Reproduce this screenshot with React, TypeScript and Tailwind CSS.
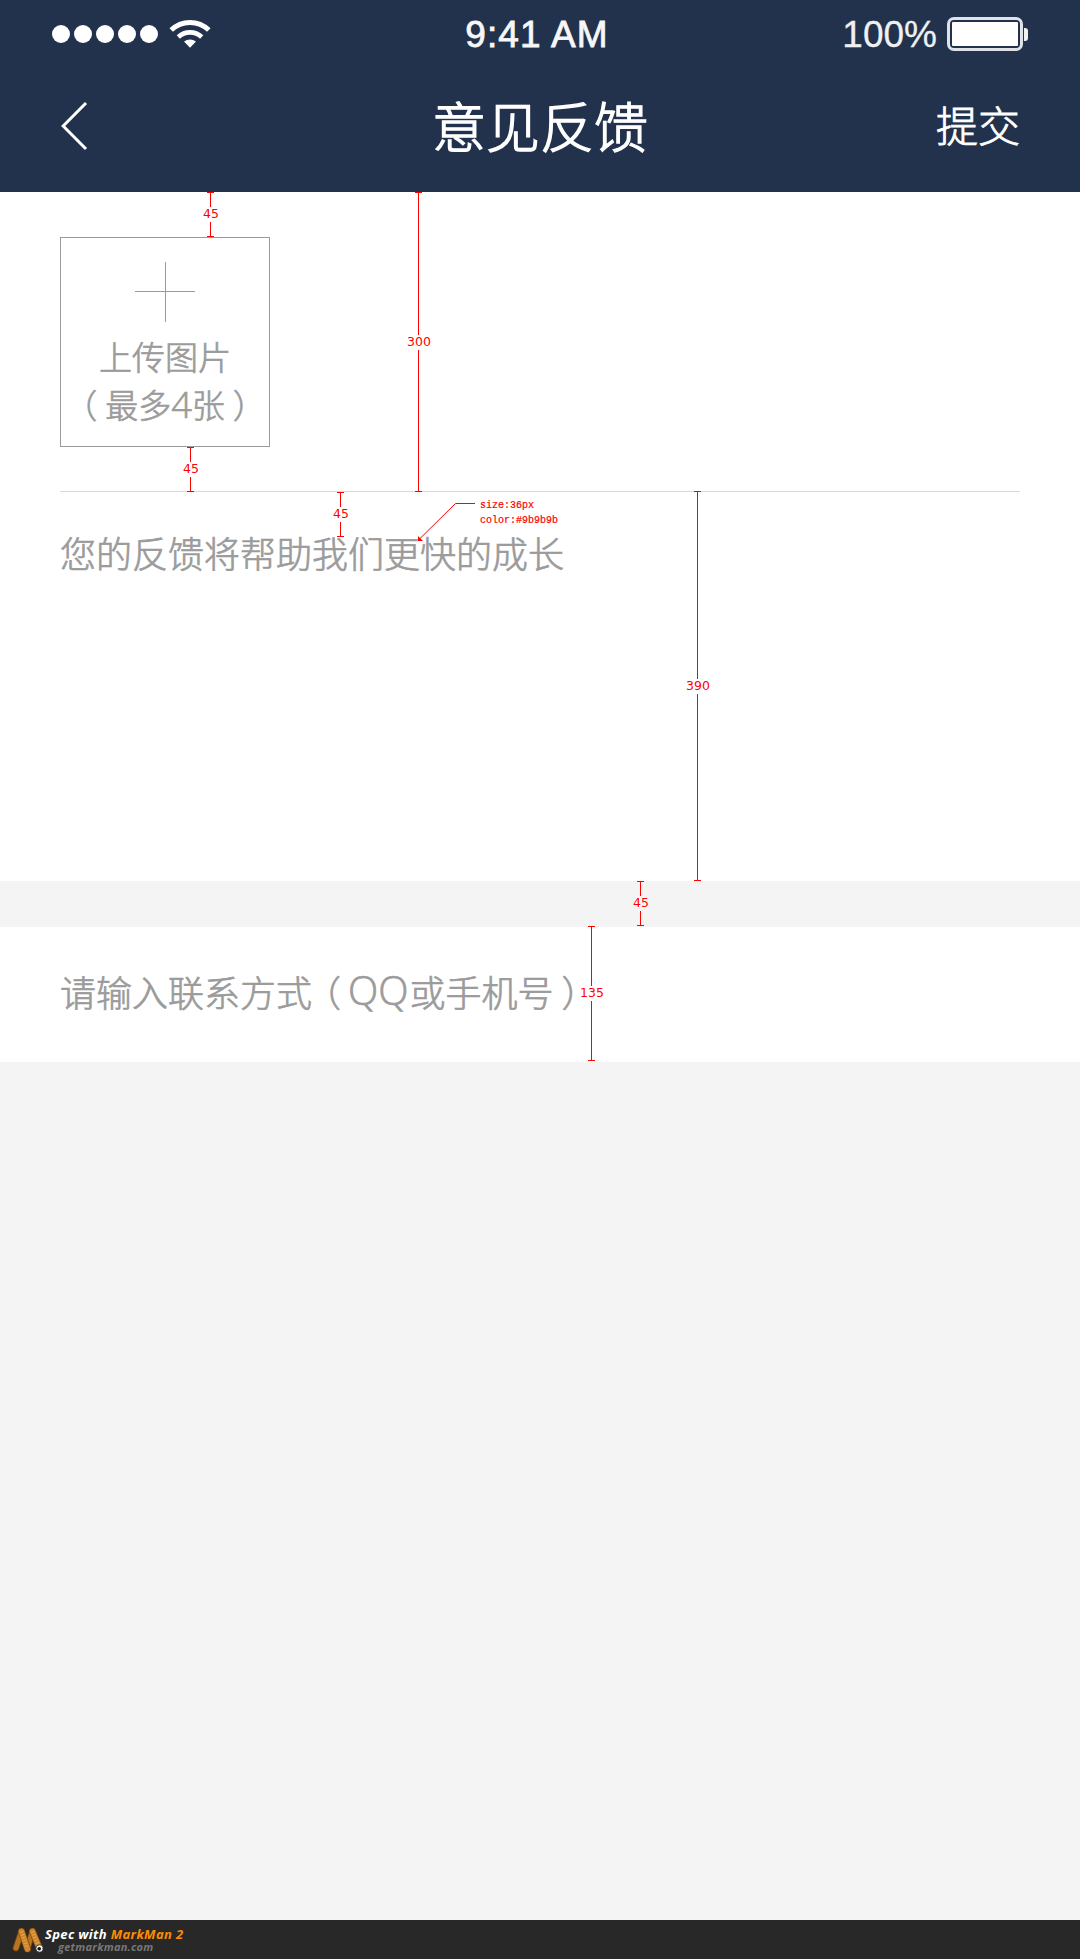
import React from "react";

type MeasureProps = { value: number; place: string };

function Measure({ value, place }: MeasureProps) {
  return (
    <div className={`absolute flex w-[7px] flex-col items-center ${place}`}>
      <i className="h-px w-[7px] bg-[#ff0000]" />
      <i className="w-px flex-1 bg-[#ff0000]" />
      <span className="-mt-px mb-px flex h-[15px] items-center justify-center pl-px font-['DejaVu_Sans',sans-serif] text-[12.5px] font-normal leading-[15px] text-[#ff0000] [text-shadow:0_0_2px_#fff,0_0_2px_#fff,0_0_1px_#fff]">
        {value}
      </span>
      <i className="w-px flex-1 bg-[#ff0000]" />
      <i className="h-px w-[7px] bg-[#ff0000]" />
    </div>
  );
}

function StatusBar() {
  return (
    <div className="grid h-[68px] grid-cols-3 items-center pl-[52px] pr-[52px]">
      <div className="flex items-center">
        <div className="flex gap-[4.1px]">
          {[0, 1, 2, 3, 4].map((n) => (
            <i key={n} className="size-[18px] rounded-full bg-white" />
          ))}
        </div>
        <svg className="ml-[10.5px]" width="42" height="30" viewBox="0 0 42 30" fill="none" stroke="#fff">
          <path d="M2.2 11A27 27 0 0 1 39.8 11" strokeWidth="5" />
          <path d="M9.3 18A17 17 0 0 1 32.7 18" strokeWidth="4.6" />
          <path d="M15 22.6Q21 18.5 27 22.6L21 28.8Z" fill="#fff" stroke="none" />
        </svg>
      </div>
      <div className="-ml-[6px] whitespace-nowrap text-center font-['Liberation_Sans',sans-serif] text-[37px] leading-none tracking-[1.1px] text-[#f7f7f7] [-webkit-text-stroke:0.8px_#f7f7f7]">
        9:41 AM
      </div>
      <div className="flex items-center justify-end">
        <span className="mr-[10px] font-['Liberation_Sans',sans-serif] text-[37px] leading-none text-[#eef0f2] [-webkit-text-stroke:0.3px_#eef0f2]">100%</span>
        <div className="h-[34px] w-[76px] rounded-[7px] border-[3px] border-[#dfe2e6] p-[2px]">
          <div className="size-full rounded-[1px] bg-white" />
        </div>
        <i className="ml-[1px] h-[13px] w-[4px] rounded-r-[3px] bg-[#f0f1f3]" />
      </div>
    </div>
  );
}

function MarkManLogo() {
  return (
    <svg className="shrink-0" width="34" height="28" viewBox="0 0 34 28" fill="none" strokeLinecap="round">
      <path d="M5 22L10.5 5.5M16.5 22L21.5 5.5" stroke="#7b450b" strokeWidth="6.6" />
      <path d="M5 22L10.5 5.5M16.5 22L21.5 5.5" stroke="#b8741f" strokeWidth="5" />
      <path d="M10.5 5.5L16.5 23M21.5 5.5L28 21" stroke="#7b450b" strokeWidth="7" />
      <path d="M10.5 5.5L16.5 23M21.5 5.5L28 21" stroke="#cb852c" strokeWidth="5.8" />
      <path d="M10.5 5.5L16.5 23M21.5 5.5L28 21" stroke="#e5a64f" strokeWidth="4" strokeDasharray="1 2" strokeLinecap="butt" />
      <circle cx="28.5" cy="22.5" r="3.7" fill="#f2f2f2" stroke="#222" strokeWidth="0.8" />
      <circle cx="28.2" cy="22.8" r="1.8" fill="#111" />
    </svg>
  );
}

export default function App() {
  return (
    <div className="relative flex h-[1959px] w-[1080px] flex-col overflow-hidden bg-[#f4f4f4] font-['Noto_Sans_CJK_SC',sans-serif] font-light">
      <header className="h-[192px] shrink-0 bg-[#22324c] text-white">
        <StatusBar />
        <div className="grid h-[116px] grid-cols-3 items-center px-[60px]">
          <svg width="30" height="50" viewBox="0 0 30 50" fill="none" stroke="#fff" strokeWidth="3">
            <path d="M26 2L3.2 25L26 48" />
          </svg>
          <h1 className="-mt-[3px] text-center text-[54px] leading-none [-webkit-text-stroke:1.3px_#fff]">意见反馈</h1>
          <button className="-mt-[4px] text-right text-[42px] leading-none [-webkit-text-stroke:0.8px_#fff]">提交</button>
        </div>
      </header>

      <main className="[-webkit-text-stroke:0.7px_#9b9b9b]">
        <section className="h-[689px] bg-white px-[60px] pt-[45px] text-[#9b9b9b]">
          <div className="flex size-[210px] flex-col items-center whitespace-nowrap border border-[#9b9b9b] pt-[24px] text-[33px] leading-[47px]">
            <svg className="shrink-0" width="60" height="60" viewBox="0 0 60 60" stroke="#9b9b9b" shapeRendering="crispEdges">
              <path d="M0 29.5H60M30.5 0V60" />
            </svg>
            <div className="mt-[11px]">上传图片</div>
            <div className="mt-px flex">
              <span className="-ml-[8px] mr-[8px]">（</span>最多
              <span className="font-['Open_Sans',sans-serif] text-[36px]">4</span>张
              <span className="-mr-[8px] ml-[8px]">）</span>
            </div>
          </div>
          <div className="mt-[44px] h-px bg-[#d9d9d9]" />
          <p className="mt-[33px] text-[36px] leading-[54px]">您的反馈将帮助我们更快的成长</p>
        </section>
        <section className="mt-[46px] flex h-[135px] items-center whitespace-nowrap bg-white px-[60px] pb-[8px] text-[36px] leading-none text-[#9b9b9b]">
          请输入联系方式<span className="-ml-[7px] mr-[7px]">（</span>
          <span className="mr-px font-['Open_Sans',sans-serif] text-[39.5px]">QQ</span>或手机号
          <span className="-mr-[8px] ml-[8px]">）</span>
        </section>
      </main>

      <footer className="mt-auto flex h-[39px] items-center bg-[#282828] pl-[11px] font-['Open_Sans',sans-serif] font-bold italic">
        <MarkManLogo />
        <div className="flex flex-col whitespace-nowrap">
          <div className="text-[13px] leading-[14px] tracking-[0.35px] text-white">
            Spec with <span className="text-[#ff8c00]">MarkMan 2</span>
          </div>
          <div className="pl-[13px] text-[11px] leading-[12px] tracking-[0.25px] text-[#777]">getmarkman.com</div>
        </div>
      </footer>

      <Measure value={45} place="left-[207px] top-[192px] h-[45px]" />
      <Measure value={45} place="left-[187px] top-[447px] h-[45px]" />
      <Measure value={45} place="left-[337px] top-[492px] h-[45px]" />
      <Measure value={300} place="left-[415px] top-[192px] h-[300px]" />
      <Measure value={390} place="left-[694px] top-[491px] h-[390px]" />
      <Measure value={45} place="left-[637px] top-[881px] h-[45px]" />
      <Measure value={135} place="left-[588px] top-[926px] h-[135px]" />

      <div className="absolute left-[417px] top-[497px] flex items-start">
        <svg width="63" height="46" viewBox="0 0 63 46" fill="none" stroke="#ff0000">
          <path d="M58 6.5H38.5L3 41.5" />
          <path d="M1 39L6 44L1 44Z" fill="#ff0000" stroke="none" />
        </svg>
        <div className="mt-px whitespace-pre font-['Liberation_Mono',monospace] text-[10px] font-normal leading-[15px] text-[#ff0000] [-webkit-text-stroke:0.2px_#ff0000]">
          {"size:36px\ncolor:#9b9b9b"}
        </div>
      </div>
    </div>
  );
}
